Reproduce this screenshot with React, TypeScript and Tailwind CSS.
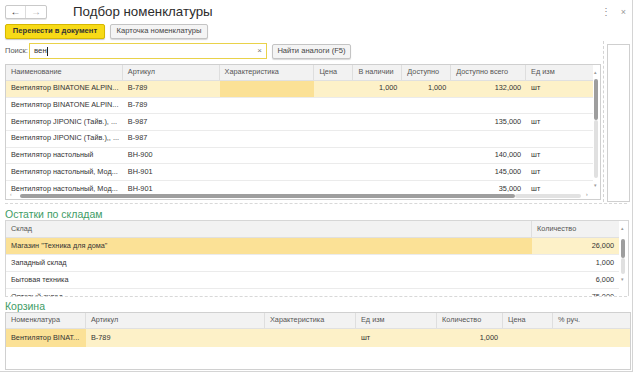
import React from 'react';

type Cell = { text?: string; right?: boolean; dark?: boolean };

const cols1 = [118, 97, 95, 39, 49, 49, 75, 67];
const head1 = ['Наименование', 'Артикул', 'Характеристика', 'Цена', 'В наличии', 'Доступно', 'Доступно всего', 'Ед изм'];

const rows1: { cells: Cell[]; active?: boolean }[] = [
  {
    active: true,
    cells: [
      { text: 'Вентилятор BINATONE ALPIN...' },
      { text: 'B-789' },
      { dark: true },
      {},
      { text: '1,000', right: true },
      { text: '1,000', right: true },
      { text: '132,000', right: true },
      { text: 'шт' },
    ],
  },
  { cells: [{ text: 'Вентилятор BINATONE ALPIN...' }, { text: 'B-789' }, {}, {}, {}, {}, {}, {}] },
  {
    cells: [
      { text: 'Вентилятор JIPONIC (Тайв.), ...' },
      { text: 'B-987' },
      {}, {}, {}, {},
      { text: '135,000', right: true },
      { text: 'шт' },
    ],
  },
  { cells: [{ text: 'Вентилятор JIPONIC (Тайв.),, ...' }, { text: 'B-987' }, {}, {}, {}, {}, {}, {}] },
  {
    cells: [
      { text: 'Вентилятор настольный' },
      { text: 'BH-900' },
      {}, {}, {}, {},
      { text: '140,000', right: true },
      { text: 'шт' },
    ],
  },
  {
    cells: [
      { text: 'Вентилятор настольный, Мод...' },
      { text: 'BH-901' },
      {}, {}, {}, {},
      { text: '145,000', right: true },
      { text: 'шт' },
    ],
  },
  {
    cells: [
      { text: 'Вентилятор настольный, Мод...' },
      { text: 'BH-901' },
      {}, {}, {}, {},
      { text: '35,000', right: true },
      { text: 'шт' },
    ],
  },
];

const stock = [
  { name: 'Магазин "Техника для дома"', qty: '26,000', active: true },
  { name: 'Западный склад', qty: '1,000' },
  { name: 'Бытовая техника', qty: '6,000' },
  { name: 'Оптовый склад', qty: '75,000' },
];

const cols3 = [81, 179, 91, 81, 66, 50, 76];
const head3 = ['Номенклатура', 'Артикул', 'Характеристика', 'Ед изм', 'Количество', 'Цена', '% руч.'];

const DARK = 'bg-[#fbe196]';
const LIGHT = 'bg-[#fdf1c8]';

export default function App() {
  return (
    <div className="w-[635px] h-[374px] bg-white overflow-hidden font-['Liberation_Sans',Arial,sans-serif] text-[#3c3c3c]">
      <div className="w-[633px] h-[372px] border-r border-b border-[#d4d4d4] flex flex-col">
        {/* title */}
        <div className="flex items-center h-[22px] pl-[5px] pr-[6px] pt-[2px]">
          <div className="flex h-[14px] border border-[#c9c9c9] rounded-[2px] bg-white shadow-[0_1px_0_#e6e6e6]">
            <div className="w-[20px] flex items-center justify-center text-[10px] font-bold text-[#333] border-r border-[#dcdcdc] leading-none">
              ←
            </div>
            <div className="w-[20px] flex items-center justify-center text-[10px] text-[#a8a8a8] leading-none">→</div>
          </div>
          <div className="ml-[26px] text-[13.3px] text-[#2c2c2c] leading-none">Подбор номенклатуры</div>
          <div className="flex-1" />
          <div className="text-[10px] text-[#888] leading-none mr-[10px]">⋮</div>
          <div className="text-[9px] text-[#999] leading-none">×</div>
        </div>

        {/* command bar */}
        <div className="flex items-center h-[18px] pl-[5px] gap-[5px]">
          <div className="h-[15px] w-[100px] flex items-center justify-center rounded-[2px] border border-[#d6b800] bg-[#f7da17] text-[7.6px] font-bold text-[#333] shadow-[0_1px_1px_#c8c8c8]">
            Перенести в документ
          </div>
          <div className="h-[15px] w-[98px] flex items-center justify-center rounded-[2px] border border-[#c4c4c4] bg-[#f4f4f4] text-[7.6px] text-[#444] shadow-[0_1px_1px_#d8d8d8]">
            Карточка номенклатуры
          </div>
        </div>

        {/* top area */}
        <div className="flex h-[163px] shrink-0">
          <div className="w-[601px] pl-[5px] flex flex-col">
            <div className="flex items-center h-[16px] mt-[3px]">
              <div className="w-[24px] text-[7.5px] text-[#555]">Поиск:</div>
              <div className="w-[238px] h-[16px] border border-[#e9d24a] bg-white flex items-center px-[4px] text-[7.8px] text-[#333]">
                <span>вен</span>
                <span className="w-[1px] h-[9px] bg-[#222]" />
                <span className="flex-1" />
                <span className="text-[8px] text-[#777]">×</span>
              </div>
              <div className="ml-[5px] h-[15px] w-[79px] flex items-center justify-center rounded-[2px] border border-[#c4c4c4] bg-[#f4f4f4] text-[7.6px] text-[#444] shadow-[0_1px_1px_#d8d8d8]">
                Найти аналоги (F5)
              </div>
            </div>

            {/* main table */}
            <div className="relative mt-[5px] w-[596px] h-[136px] border border-[#cfcfcf] flex overflow-hidden">
              <div className="flex flex-col w-[587px]">
                <div className="flex h-[16px] shrink-0 bg-[#f2f2f2] border-b border-[#e0e0e0]">
                  {head1.map((h, i) => (
                    <div
                      key={h}
                      className="flex items-center px-[5px] text-[7.3px] text-[#555] border-r border-[#dedede] last:border-r-0 whitespace-nowrap"
                      style={{ width: cols1[i] - (i === 0 ? 1 : 0) }}
                    >
                      {h}
                    </div>
                  ))}
                </div>
                {rows1.map((r, ri) => (
                  <div
                    key={ri}
                    className={`flex h-[16.7px] shrink-0 border-b border-[#ebebeb] ${r.active ? LIGHT : 'bg-white'}`}
                  >
                    {r.cells.map((c, ci) => (
                      <div
                        key={ci}
                        className={`flex items-center px-[5px] text-[7.3px] text-[#333] whitespace-nowrap overflow-hidden ${
                          c.right ? 'justify-end' : ''
                        } ${c.dark ? DARK : ''}`}
                        style={{ width: cols1[ci] - (ci === 0 ? 1 : 0) }}
                      >
                        {c.text}
                      </div>
                    ))}
                  </div>
                ))}
              </div>
              <div className="relative w-[7px] bg-white">
                <div className="absolute left-[1px] top-[5px] text-[5px] leading-none text-[#9a9a9a]">▴</div>
                <div className="absolute left-[1px] top-[14px] w-[4px] h-[41px] rounded-full bg-[#9e9e9e]" />
                <div className="absolute left-[1px] top-[55px] w-[4px] h-[58px] rounded-full bg-[#e0e0e0]" />
                <div className="absolute left-[1px] top-[118px] text-[5px] leading-none text-[#9a9a9a]">▾</div>
              </div>
              {/* horizontal scrollbar */}
              <div className="absolute left-0 right-0 bottom-0 h-[6px] bg-white">
                <div className="absolute left-[4px] top-[-1px] text-[5px] leading-none text-[#9a9a9a]">‹</div>
                <div className="absolute left-[14px] top-[1px] h-[4px] w-[495px] rounded-full bg-[#9e9e9e]" />
                <div className="absolute left-[509px] top-[1px] h-[4px] w-[66px] rounded-full bg-[#e2e2e2]" />
                <div className="absolute left-[580px] top-[-1px] text-[5px] leading-none text-[#777]">›</div>
              </div>
            </div>
          </div>

          <div className="ml-[2px] mt-[1px] mb-[1px] border-l border-dashed border-[#d4d4d4]" />
          <div className="ml-[3px] mt-[4px] w-[23px] h-[158px] border border-[#cfcfcf] bg-white" />
        </div>

        <div className="mx-[5px] border-t border-dashed border-[#d8d8d8]" />

        {/* stock */}
        <div className="pl-[5px] pt-[4px] h-[16px] shrink-0 flex items-center text-[10.5px] text-[#3e9c66] leading-none">
          Остатки по складам
        </div>
        <div className="ml-[5px] w-[624px] h-[76px] shrink-0 border-l border-r border-t border-[#d6d6d6] flex overflow-hidden">
          <div className="flex flex-col w-[614px]">
            <div className="flex h-[17px] shrink-0 bg-[#f2f2f2] border-b border-[#e0e0e0] text-[7.3px] text-[#555]">
              <div className="w-[526px] flex items-center px-[5px] border-r border-[#dedede]">Склад</div>
              <div className="flex-1 flex items-center px-[5px]">Количество</div>
            </div>
            {stock.map((s) => (
              <div key={s.name} className="flex h-[17px] shrink-0 border-b border-[#ebebeb] text-[7.3px] text-[#333]">
                <div className={`w-[526px] flex items-center px-[5px] ${s.active ? DARK : ''}`}>{s.name}</div>
                <div className={`flex-1 flex items-center justify-end px-[5px] ${s.active ? LIGHT : ''}`}>{s.qty}</div>
              </div>
            ))}
          </div>
          <div className="relative w-[9px] bg-white">
            <div className="absolute left-[2px] top-[5px] text-[5px] leading-none text-[#9a9a9a]">▴</div>
            <div className="absolute left-[2px] top-[18px] w-[4px] h-[19px] rounded-full bg-[#9e9e9e]" />
            <div className="absolute left-[2px] top-[37px] w-[4px] h-[16px] rounded-full bg-[#e0e0e0]" />
            <div className="absolute left-[2px] top-[56px] text-[5px] leading-none text-[#9a9a9a]">▾</div>
          </div>
        </div>

        <div className="mx-[5px] border-t border-dashed border-[#d8d8d8]" />

        {/* basket */}
        <div className="pl-[5px] pt-[3px] h-[15px] shrink-0 flex items-center text-[10.5px] text-[#3e9c66] leading-none">Корзина</div>
        <div className="ml-[5px] w-[626px] flex-1 mb-[1px] border border-[#d0d0d0] flex flex-col">
          <div className="flex h-[16px] bg-[#f2f2f2] border-b border-[#e0e0e0]">
            {head3.map((h, i) => (
              <div
                key={h}
                className="flex items-center px-[5px] text-[7.3px] text-[#555] border-r border-[#dedede] last:border-r-0 whitespace-nowrap"
                style={{ width: cols3[i] - (i === 0 ? 1 : 0) }}
              >
                {h}
              </div>
            ))}
          </div>
          <div className={`flex h-[18px] ${LIGHT} text-[7.3px] text-[#333] whitespace-nowrap`}>
            <div className={`flex items-center px-[5px] overflow-hidden ${DARK}`} style={{ width: 80 }}>
              Вентилятор BINAT...
            </div>
            <div className="flex items-center px-[5px]" style={{ width: 179 }}>B-789</div>
            <div style={{ width: 91 }} />
            <div className="flex items-center px-[5px]" style={{ width: 81 }}>шт</div>
            <div className="flex items-center justify-end px-[5px]" style={{ width: 66 }}>1,000</div>
            <div style={{ width: 50 }} />
            <div className="flex-1" />
          </div>
        </div>
      </div>
    </div>
  );
}
